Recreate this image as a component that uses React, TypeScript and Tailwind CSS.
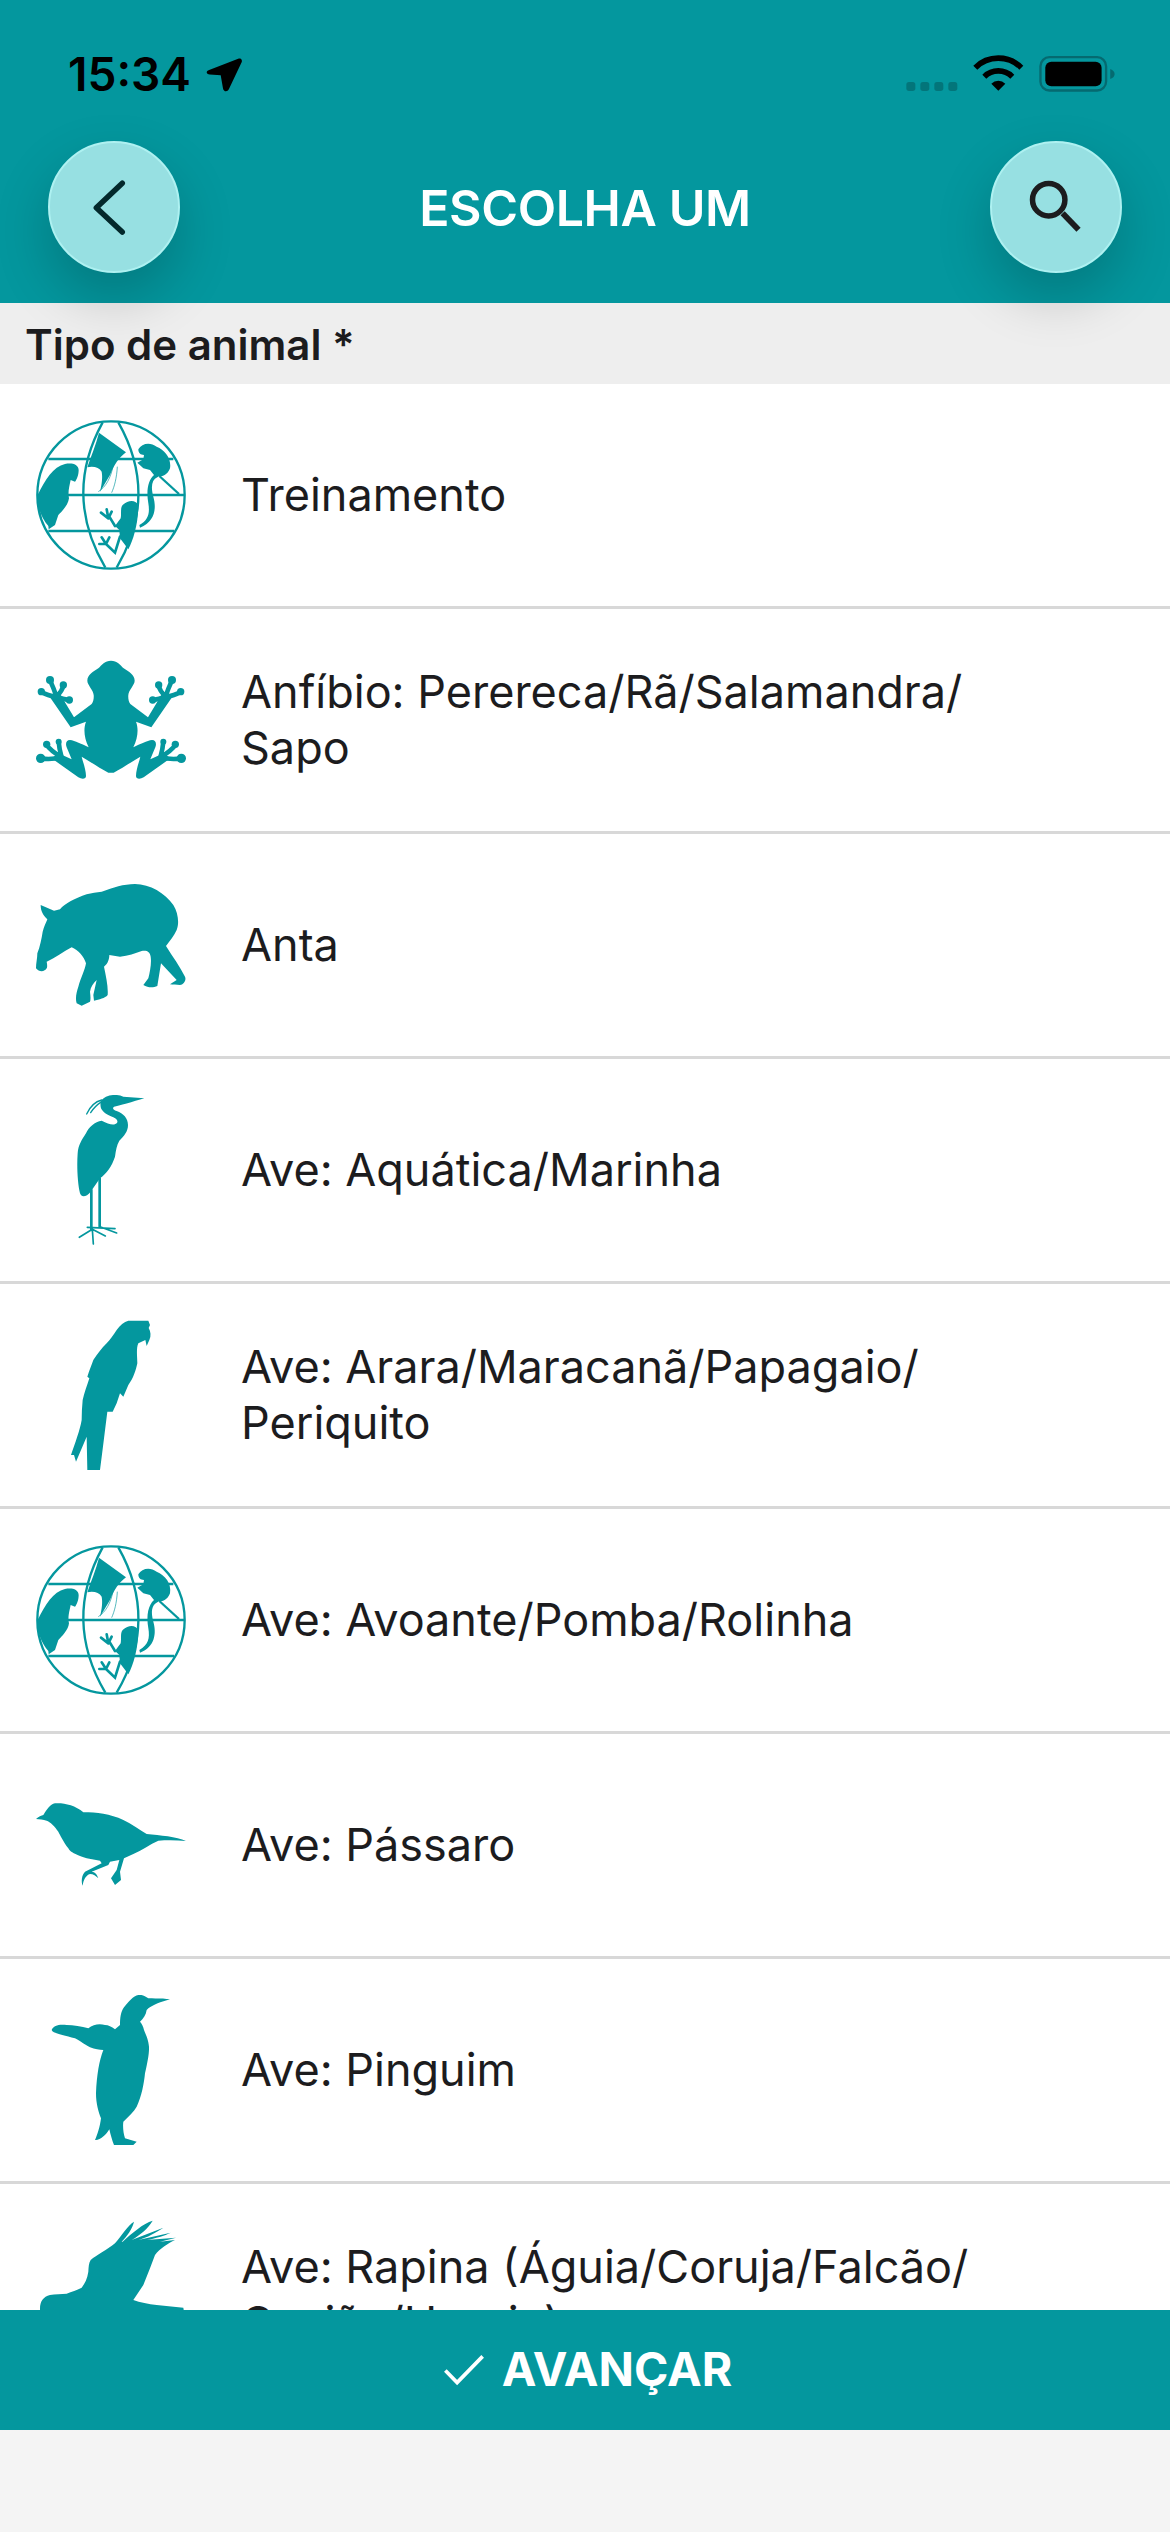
import type { ReactNode } from "react";

const TEAL = "#04979e";

function Icon({ viewBox, children }: { viewBox: string; children: ReactNode }) {
  return (
    <svg viewBox={viewBox} className="h-[150px] w-[150px] shrink-0" fill={TEAL}>
      {children}
    </svg>
  );
}

function GlobeIcon() {
  return (
    <Icon viewBox="108 90 450 450">
      <g fill="none" stroke={TEAL} strokeWidth="7">
        <circle cx="333" cy="315" r="221" />
        <path d="M308 97Q188 315 316 533M355 97Q478 315 350 533" />
        <path d="M145 207H520M112 315H553M145 423H522" />
        <path d="M478 258L537 312" />
        <path d="M340 225C332 265 318 290 295 305M352 230C350 265 343 290 335 308" strokeWidth="2" />
        <path
          d="M345 408L328 380M325 385L303 368M325 385L320 358M325 385L335 365M360 440L345 488L318 462M318 462L298 462M318 462L305 442M318 462L328 442"
          strokeWidth="8"
          strokeLinecap="round"
        />
      </g>
      <path d="M113 315C135 270 160 230 195 222C215 218 235 222 236 240C236 255 230 270 225 275L212 270C208 290 203 305 207 325C205 345 185 365 175 375L165 405L146 418L145 408C125 385 110 350 113 315Z" />
      <path d="M297 128L378 187C355 205 345 220 330 255L300 305C306 280 308 262 305 245C298 232 280 228 262 232C272 200 288 165 297 128Z" />
      <path d="M415 178C425 160 450 155 470 170C495 180 515 205 510 235C505 250 490 262 478 258L472 262C455 270 452 290 460 320C470 355 465 395 420 413L418 405C445 390 450 370 445 340C438 300 445 270 462 255L450 240L430 235L412 218L430 208L432 195C422 195 415 190 415 178Z" />
      <path d="M415 345C405 328 385 330 368 345C360 355 365 370 362 385L345 408L358 420L360 445L385 478C400 450 415 400 415 345Z" />
    </Icon>
  );
}

function FrogIcon() {
  const half = (
    <g>
      <path d="M333 812C315 812 305 825 295 835C280 845 262 855 262 872C262 885 280 900 281 915C282 925 280 935 275 942L222 982L180 912L152 925L212 1012L258 995C250 1015 252 1045 266 1072C245 1062 225 1052 210 1050C198 1050 196 1062 200 1072C205 1085 210 1095 215 1108L175 1090L155 1105L235 1162C245 1168 258 1168 258 1158C258 1140 250 1120 245 1100C270 1115 300 1135 325 1148L333 1148Z" />
      <path
        d="M168 920C165 900 155 885 150 870M168 920C180 910 188 900 190 885M168 920C185 925 198 930 208 930M168 920C150 918 135 912 124 905M185 1102C160 1108 140 1108 122 1105M185 1102C165 1090 150 1080 140 1065M185 1102C180 1085 177 1070 176 1055"
        fill="none"
        stroke={TEAL}
        strokeWidth="14"
        strokeLinecap="round"
      />
      <circle cx="150" cy="870" r="12" />
      <circle cx="190" cy="885" r="11" />
      <circle cx="208" cy="930" r="11" />
      <circle cx="124" cy="905" r="11" />
      <circle cx="122" cy="1105" r="14" />
      <circle cx="140" cy="1063" r="11" />
      <circle cx="176" cy="1055" r="9" />
    </g>
  );
  return (
    <Icon viewBox="108 765 450 450">
      {half}
      <g transform="translate(666 0) scale(-1 1)">{half}</g>
    </Icon>
  );
}

function TapirIcon() {
  return (
    <Icon viewBox="108 60 450 450">
      <path d="M122 165L162 182L180 178C195 160 225 145 260 133C275 128 290 128 305 125C340 113 370 102 405 102C450 102 495 130 520 165C535 190 538 220 530 240C522 258 510 272 498 288C518 320 540 350 555 380C560 392 550 405 540 405C530 405 518 404 510 403L530 390L483 340L472 408C460 413 445 414 430 405L445 385C450 365 455 340 452 320C450 305 440 300 425 303C405 310 385 318 360 320L328 315C328 325 325 340 312 350C318 380 325 410 323 435C315 445 298 448 282 452L280 435L290 390C280 400 272 410 270 425C272 440 272 450 270 455L245 467L230 460C225 445 230 425 235 410C242 385 255 360 258 340C252 320 235 300 215 292C190 305 165 325 140 335C142 345 142 352 140 355C135 365 118 368 108 355C108 340 112 325 112 310C120 290 125 265 128 245C132 230 138 218 142 208C130 195 122 185 122 165Z" />
    </Icon>
  );
}

function HeronIcon() {
  return (
    <Icon viewBox="108 135 450 450">
      <path d="M433 145L370 140C355 133 335 133 318 140C305 147 298 155 303 175C308 185 320 195 340 202C352 207 355 215 350 220C340 228 325 222 305 212C285 215 265 232 258 250C245 270 235 285 233 310C230 350 233 400 240 430C245 445 260 440 272 425L300 385C320 370 335 350 345 320C348 300 350 285 358 272C372 258 384 245 384 225C384 205 370 190 350 183C340 180 336 175 342 170C355 168 400 155 433 145Z" />
      <g fill="none" stroke={TEAL} strokeLinecap="round">
        <path d="M274 420V540M299 385V530" strokeWidth="8" />
        <path
          d="M277 538L238 562M277 538L280 582M277 538L316 558M262 532L345 536M300 530L350 549"
          strokeWidth="5"
        />
        <path d="M305 150C285 155 270 170 260 192M305 155C290 165 280 175 272 188" strokeWidth="4" />
      </g>
    </Icon>
  );
}

function MacawIcon() {
  return (
    <Icon viewBox="108 810 450 450">
      <path d="M385 812L445 812L450 825L446 834C452 845 454 858 448 870L440 888L436 870L415 880C408 895 412 920 412 940C408 960 400 985 385 1005L370 1040L360 1030L350 1060L338 1085L322 1085C315 1140 308 1200 300 1260L262 1260L260 1160L228 1235L222 1215L213 1215C225 1180 240 1140 245 1110C245 1090 246 1070 248 1050C252 1030 262 1005 268 985L262 980C268 960 275 945 280 930C292 912 305 895 320 880C330 870 340 855 350 840C360 825 372 815 385 812Z" />
    </Icon>
  );
}

function BirdIcon() {
  return (
    <Icon viewBox="108 60 450 450">
      <path d="M108 207C115 200 125 197 130 195C140 180 150 162 165 160C190 158 225 165 250 187C290 187 330 192 370 210C395 222 420 240 440 252C480 256 530 260 558 273C530 270 500 270 475 272C450 282 425 302 400 312L372 325L360 365L363 390L345 405L333 385L350 360L358 330L330 335L325 345L275 365C285 365 292 375 295 385C288 378 280 372 270 372C258 375 250 390 248 407C243 395 245 375 255 365L305 340L300 332C280 328 255 325 240 318C220 310 210 305 205 295C190 275 180 255 175 245C165 230 150 215 140 212C130 208 118 208 108 207Z" />
    </Icon>
  );
}

function PenguinIcon() {
  return (
    <Icon viewBox="108 735 450 450">
      <path d="M510 748C490 744 465 746 445 745C435 738 425 733 415 735C400 738 385 755 372 772C362 785 360 805 360 825L345 838C335 830 325 825 315 825C300 820 280 822 265 835C245 830 220 825 200 825C180 822 160 825 155 840C158 850 190 855 225 865C245 875 255 885 270 892C285 898 298 900 310 900C298 930 290 975 288 1030C288 1060 295 1085 303 1105C300 1130 292 1155 285 1170C300 1172 318 1155 328 1138C332 1155 336 1170 342 1185L400 1185L410 1175L375 1165C370 1150 368 1130 370 1115C385 1100 402 1085 410 1070C425 1040 432 1000 435 970C442 940 448 910 447 890C445 865 435 850 432 840C430 830 425 820 420 815C430 805 438 795 440 780C455 765 485 755 510 748Z" />
    </Icon>
  );
}

function RaptorIcon() {
  return (
    <Icon viewBox="108 95 450 450">
      <path d="M120 360C120 340 130 325 150 320C165 316 185 318 200 316C215 310 230 305 245 298C255 285 262 270 265 250C266 235 266 225 272 215C290 200 320 185 345 165C362 145 385 110 402 100C398 120 380 145 365 160L368 160C395 135 430 105 458 97C445 120 420 140 395 155L490 118C470 132 440 148 415 155L512 133C495 142 465 150 440 155L528 148L480 160L525 155C505 165 480 180 465 200L450 240L430 290L400 335C420 342 445 348 470 350L550 358L560 420L120 420Z" />
    </Icon>
  );
}

const rows: { icon: ReactNode; label: string[] }[] = [
  { icon: <GlobeIcon />, label: ["Treinamento"] },
  { icon: <FrogIcon />, label: ["Anfíbio: Perereca/Rã/Salamandra/", "Sapo"] },
  { icon: <TapirIcon />, label: ["Anta"] },
  { icon: <HeronIcon />, label: ["Ave: Aquática/Marinha"] },
  { icon: <MacawIcon />, label: ["Ave: Arara/Maracanã/Papagaio/", "Periquito"] },
  { icon: <GlobeIcon />, label: ["Ave: Avoante/Pomba/Rolinha"] },
  { icon: <BirdIcon />, label: ["Ave: Pássaro"] },
  { icon: <PenguinIcon />, label: ["Ave: Pinguim"] },
  { icon: <RaptorIcon />, label: ["Ave: Rapina (Águia/Coruja/Falcão/", "Gavião/Harpia)"] },
];

function StatusBar() {
  return (
    <div className="flex h-[141px] items-start justify-between pl-[68px] pr-[55px] pt-[54px]">
      <div className="flex items-center gap-[13px]">
        <span className="text-[46px] leading-[40px] font-semibold text-black">15:34</span>
        <svg viewBox="605 50 120 112" className="h-[37px] w-[40px]" fill="#000">
          <path d="M708 58C716 55 722 62 718 70L680 150C675 160 664 158 662 148L655 108L622 106C610 104 610 95 620 92Z" />
        </svg>
      </div>
      <svg viewBox="80 42 626 156" className="h-[52px] w-[208.6px]">
        <g fill="#000" opacity="0.22">
          <rect x="81" y="126" width="27" height="27" rx="8" />
          <rect x="123" y="126" width="27" height="27" rx="8" />
          <rect x="165" y="126" width="27" height="27" rx="8" />
          <rect x="207" y="126" width="27" height="27" rx="8" />
        </g>
        <path d="M288 83A98 98 0 0 1 426 83M315 110A60 60 0 0 1 399 110" fill="none" stroke="#000" strokeWidth="17" />
        <path d="M357 152L336 131A30 30 0 0 1 378 131Z" fill="#000" />
        <rect x="483.5" y="51.5" width="197" height="100" rx="27" fill="none" stroke="#056a70" strokeWidth="7" />
        <rect x="498" y="65" width="169" height="74" rx="18" fill="#000" />
        <path d="M693 87C702 90 706 96 706 102C706 108 702 114 693 117Z" fill="#056a70" />
      </svg>
    </div>
  );
}

function RoundButton({ children }: { children: ReactNode }) {
  return (
    <button
      type="button"
      className="flex h-[132px] w-[132px] items-center justify-center rounded-full border-2 border-[#aef1f1] bg-[#97e0e2] shadow-[0_24px_56px_rgba(0,0,0,0.2)]"
    >
      {children}
    </button>
  );
}

export default function App() {
  return (
    <div className="flex h-[2532px] w-[1170px] flex-col overflow-hidden bg-[#f4f4f4] font-['Inter',sans-serif] text-[#1c1c1e]">
      <header className="relative z-10 h-[303px] shrink-0 bg-[#04979e]">
        <StatusBar />
        <div className="flex items-center justify-between px-[48px]">
          <RoundButton>
            <svg viewBox="145 303 395 395" className="h-[132px] w-[132px]" fill="none">
              <path d="M368 427L288 503L368 578" stroke="#03292c" strokeWidth="17" strokeLinecap="round" strokeLinejoin="round" />
            </svg>
          </RoundButton>
          <h1 className="mt-[2px] text-[50px] font-semibold tracking-[-0.4px] text-white">ESCOLHA UM</h1>
          <RoundButton>
            <svg viewBox="330 303 395 395" className="h-[132px] w-[132px]" fill="none" stroke="#1c1c1e">
              <circle cx="505" cy="478" r="50" strokeWidth="17" />
              <path d="M548 520L597 571" strokeWidth="18" />
            </svg>
          </RoundButton>
        </div>
      </header>

      <div className="flex h-[81px] shrink-0 items-center bg-[#eeeeee] pl-[25px] pt-[2px] text-[42px] font-semibold">Tipo de animal *</div>

      <main className="h-[1926px] shrink-0 overflow-hidden bg-white">
        {rows.map((row) => (
          <div key={row.label[0]} className="flex h-[225px] items-center gap-[55px] border-b-[3px] border-[#d8d8d8] pl-[36px]">
            {row.icon}
            <p className="text-[45px] leading-[56px]">
              {row.label.map((line) => (
                <span key={line} className="block">
                  {line}
                </span>
              ))}
            </p>
          </div>
        ))}
      </main>

      <button type="button" className="flex h-[120px] shrink-0 items-center justify-center gap-[17px] bg-[#04979e] pl-[5px] text-[46.5px] font-bold text-white">
        <svg viewBox="130 165 125 95" className="h-[32px] w-[42px]" fill="none">
          <path d="M137 214L172 250L248 172" stroke="#fff" strokeWidth="11" />
        </svg>
        AVANÇAR
      </button>
    </div>
  );
}
